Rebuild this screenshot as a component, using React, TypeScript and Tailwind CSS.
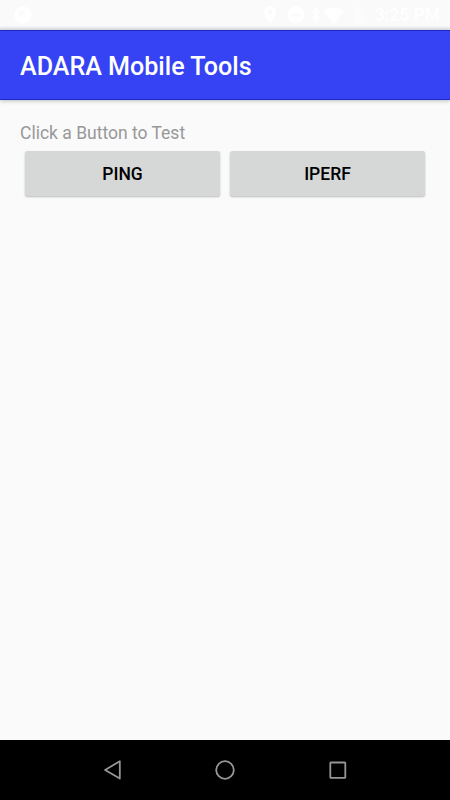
import { useState } from "react";

const tools = ["Ping", "iPerf"];

function StatusBar() {
  return (
    <div className="flex h-[30px] items-center bg-gradient-to-b from-[#fafafa] from-85% to-[#e2e2e6] pl-[14px] pr-[10px] text-white">
      <svg width="18" height="18" viewBox="0 0 18 18" fill="currentColor">
        <circle cx="9" cy="9" r="8.5" />
        <circle cx="7.500" cy="7.500" r="3.500" fill="#fbfbfb" />
      </svg>
      <svg className="ml-auto" width="14" height="18" viewBox="0 0 14 18" fill="currentColor">
        <path fillRule="evenodd" d="M7 0a6 6 0 0 0-6 6c0 4.500 6 11.500 6 11.500S13 10.500 13 6a6 6 0 0 0-6-6zm0 4a2.200 2.200 0 1 1 0 4.400A2.200 2.200 0 0 1 7 4z" />
      </svg>
      <svg className="ml-[10px]" width="18" height="18" viewBox="0 0 18 18" fill="currentColor">
        <path fillRule="evenodd" d="M9 .5a8.500 8.500 0 1 0 0 17 8.500 8.500 0 0 0 0-17zM4.500 7.800h9v2.400h-9z" />
      </svg>
      <svg className="ml-[6px]" width="9" height="16" viewBox="0 0 9 16" fill="none" stroke="currentColor" strokeWidth="1.500">
        <path d="M1 4.500 8 11l-3.500 3.500v-13L8 5l-7 6.500" />
      </svg>
      <svg className="ml-[3px]" width="21" height="17" viewBox="0 0 21 17" fill="currentColor">
        <path d="M0 4.500C6-.5 15-.5 21 4.500L10.500 17z" />
      </svg>
      <svg className="ml-[10px] opacity-50" width="10" height="17" viewBox="0 0 10 17" fill="currentColor">
        <path d="M3 0h4v2h3v15H0V2h3z" />
      </svg>
      <span className="ml-[10px] w-[66px] whitespace-nowrap text-right text-[17.5px] font-medium leading-[30px]">3:25 PM</span>
    </div>
  );
}

function NavBar() {
  return (
    <div className="flex h-[60px] items-center justify-center gap-[92.5px] bg-black text-[#969696]">
      <button aria-label="Back">
        <svg width="20" height="22" viewBox="0 0 20 22" fill="none" stroke="currentColor" strokeWidth="1.800" strokeLinejoin="round">
          <path d="M16.800 2.200v17.400L2.100 10.900z" />
        </svg>
      </button>
      <button aria-label="Home">
        <svg width="20" height="22" viewBox="0 0 20 22" fill="none" stroke="currentColor" strokeWidth="1.800">
          <circle cx="10" cy="11" r="8.800" />
        </svg>
      </button>
      <button aria-label="Recent apps">
        <svg width="20" height="22" viewBox="0 0 20 22" fill="none" stroke="currentColor" strokeWidth="1.800">
          <rect x="2.300" y="3.500" width="15" height="15.300" rx="0.600" />
        </svg>
      </button>
    </div>
  );
}

export default function App() {
  const [selectedTool, setSelectedTool] = useState("");

  return (
    <div className="flex h-[800px] w-[450px] flex-col overflow-hidden bg-[#fafafa] font-[Roboto,sans-serif]">
      <StatusBar />
      <header className="flex h-[70px] items-center border-y border-[#1d2bc4] bg-[#3643f4] px-5 pt-[3px] shadow-[0_1px_4px_rgba(0,0,0,0.25)]">
        <h1 className="whitespace-nowrap text-[25.1px] font-medium text-white">ADARA Mobile Tools</h1>
      </header>
      <main className="flex-1 px-5 pt-[21px]">
        <p className="text-[17.5px] leading-[25px] text-[#989898]">Click a Button to Test</p>
        <div className="mt-[5px] flex gap-[10px] px-[5px]">
          {tools.map((tool) => (
            <button
              key={tool}
              aria-pressed={selectedTool === tool}
              onClick={() => setSelectedTool(tool)}
              className="h-[45px] flex-1 rounded-[2.5px] bg-[#d6d7d7] pt-[2px] text-[17.5px] font-medium uppercase text-black shadow-[0_1px_2px_rgba(0,0,0,0.25)]"
            >
              {tool}
            </button>
          ))}
        </div>
      </main>
      <NavBar />
    </div>
  );
}
